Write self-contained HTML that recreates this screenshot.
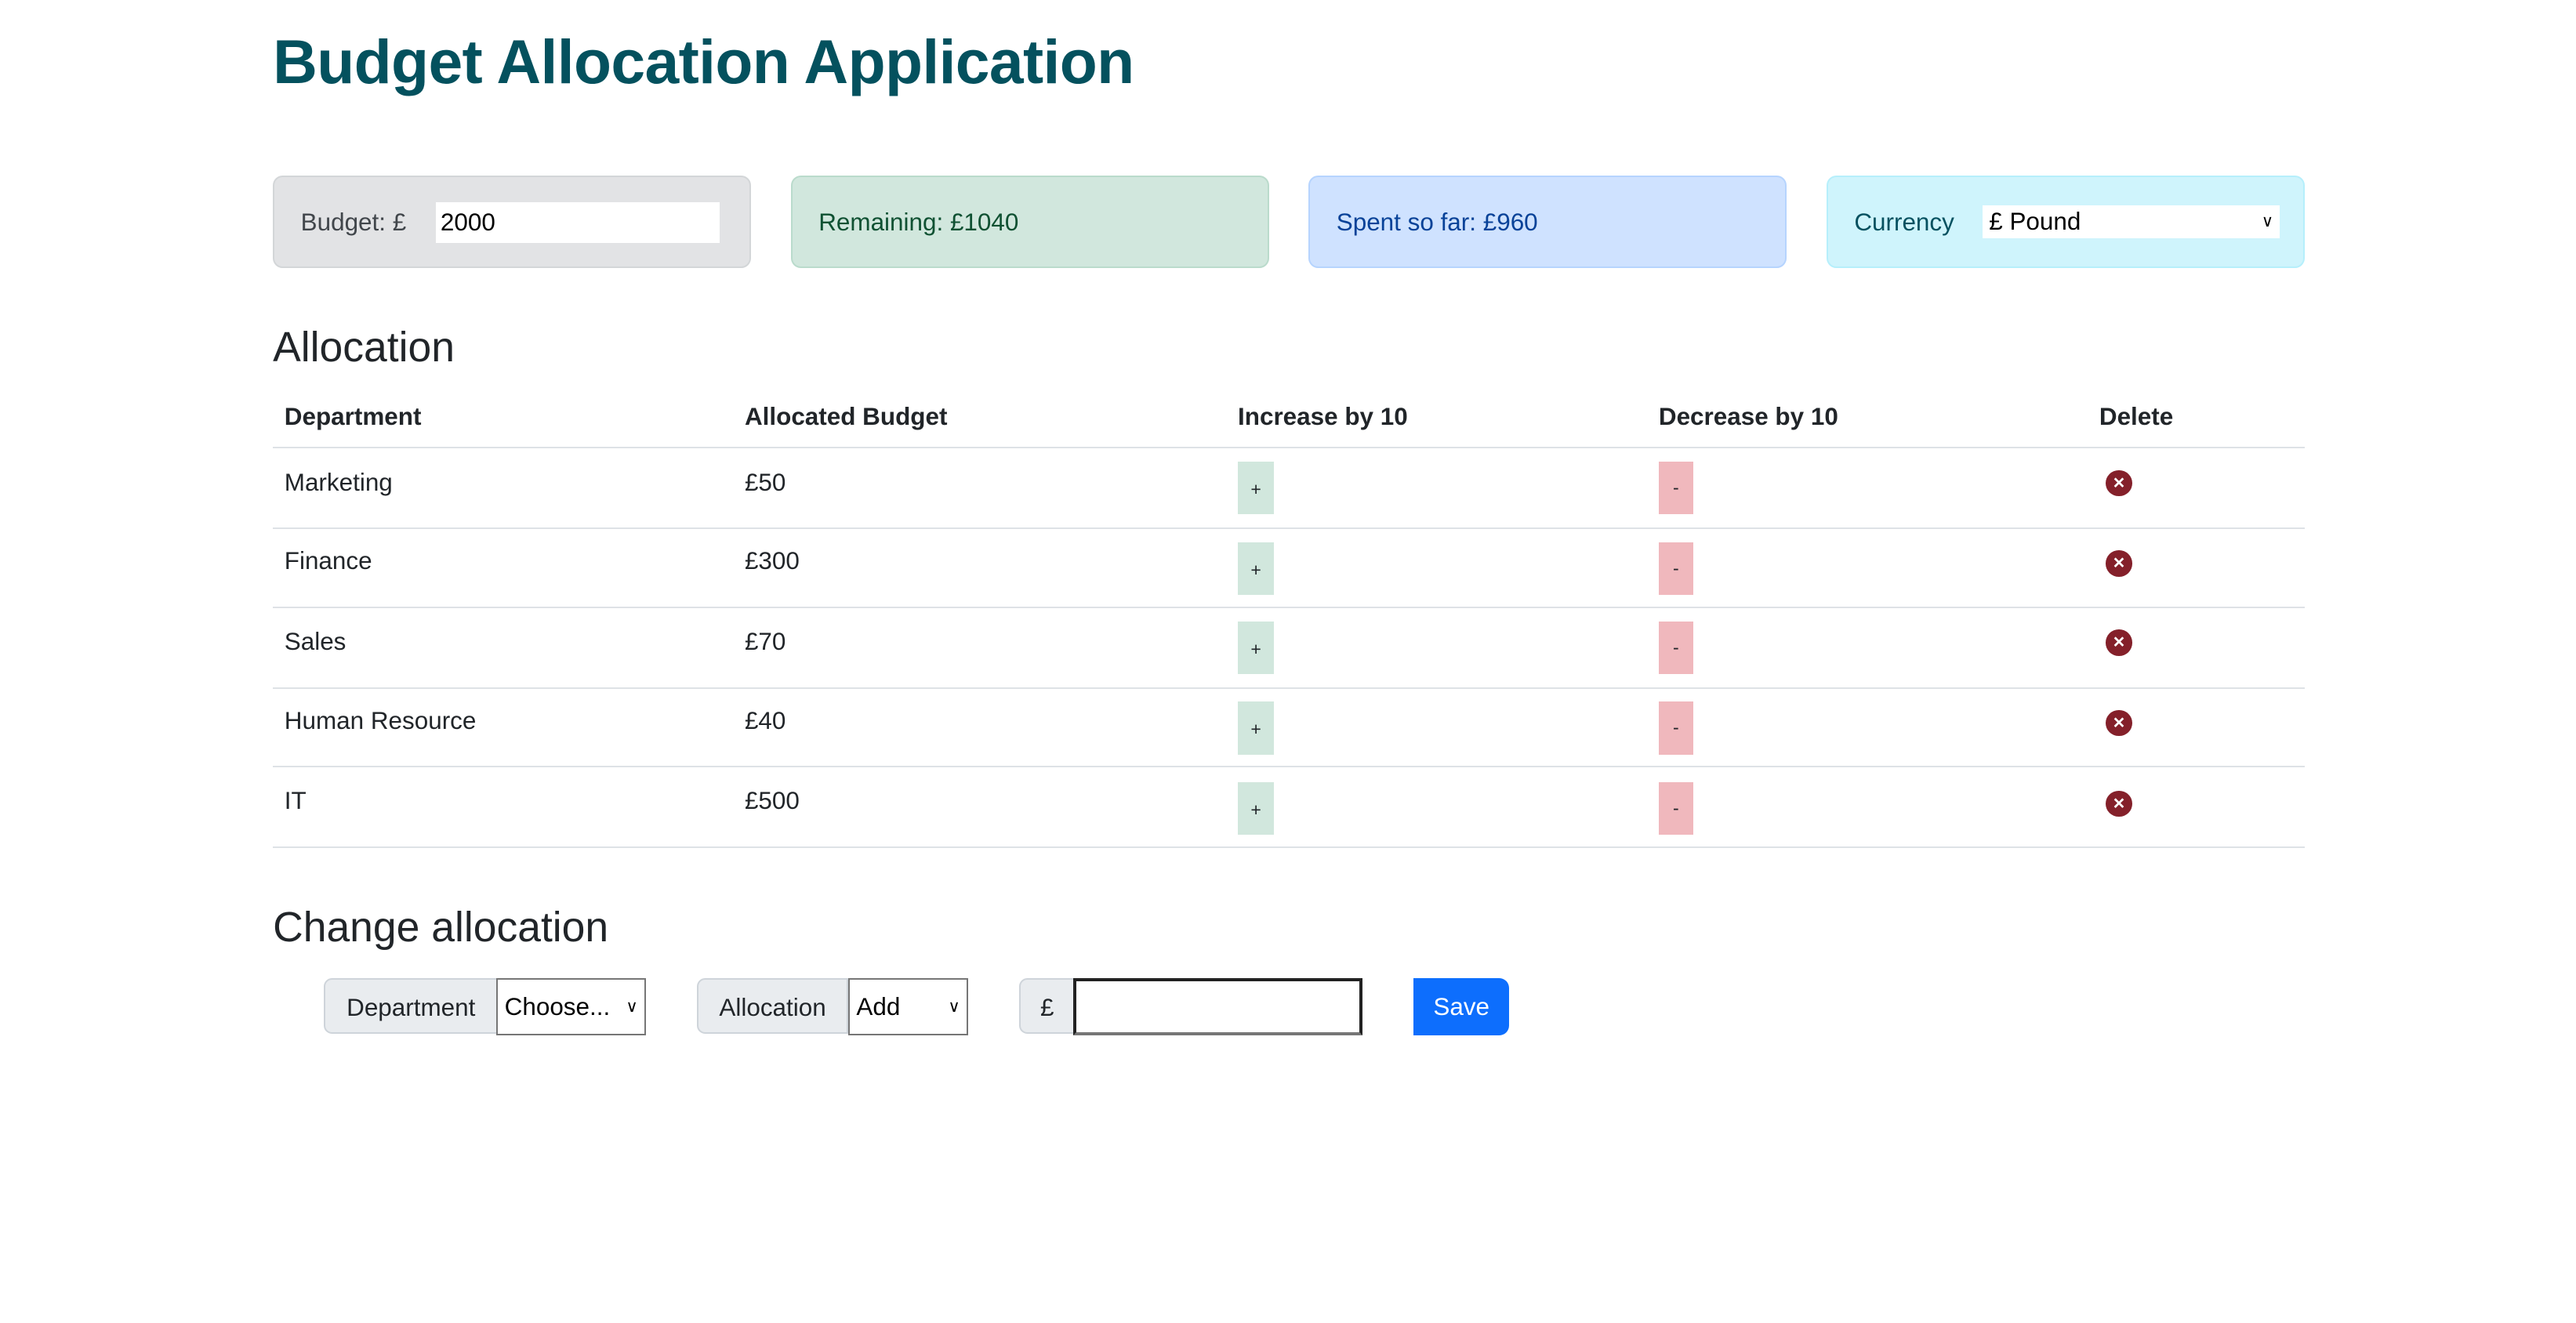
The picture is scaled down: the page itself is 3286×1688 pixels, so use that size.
<!DOCTYPE html>
<html><head><meta charset="utf-8"><style>
html,body{margin:0;padding:0;background:#fff;}
body{width:1567px;height:805px;zoom:2.097;font-family:"Liberation Sans",sans-serif;color:#212529;position:relative;overflow:hidden;}
.a{position:absolute;}
h1{position:absolute;left:166px;top:16px;margin:0;font-size:37.5px;font-weight:bold;color:#04515e;letter-spacing:-0.3px;}
.box{position:absolute;top:107px;width:289px;height:54px;border:1px solid;border-radius:6px;font-size:15px;}
.box span{position:absolute;left:16px;top:19px;}
h2{position:absolute;left:166px;margin:0;font-size:25.5px;font-weight:normal;}
.th{position:absolute;top:245px;font-weight:bold;font-size:15px;}
.line{position:absolute;left:166px;width:1236px;height:1px;background:#dee2e6;}
.td{position:absolute;font-size:15px;}
.plus{position:absolute;left:753px;width:22px;height:32px;background:#d1e7dd;font-size:11px;text-align:center;line-height:34px;}
.minus{position:absolute;left:1009px;width:21px;height:32px;background:#f0b8bd;font-size:11px;text-align:center;line-height:32px;}
.x{position:absolute;left:1281px;width:16px;height:16px;border-radius:50%;background:#84202a;color:#fff;font-size:12px;font-weight:bold;text-align:center;line-height:16px;}
.lbl{position:absolute;top:595px;height:34px;background:#e9ecef;border:1px solid #ced4da;border-radius:5px 0 0 5px;font-size:15px;line-height:34px;text-align:center;box-sizing:border-box;}
.sel{position:absolute;top:595px;height:35px;border:1px solid #767676;box-sizing:border-box;font-size:15px;line-height:33px;padding-left:4px;background:#fff;color:#000;}
.sel i{position:absolute;right:4px;top:0;font-style:normal;font-size:10px;}
</style></head><body>
<h1>Budget Allocation Application</h1>

<div class="box" style="left:166px;background:#e2e3e5;border-color:#d3d6d8;color:#41464b;"><span>Budget: £</span>
<div class="a" style="left:98px;top:15px;width:173px;height:25px;background:#fff;color:#000;font-size:15px;line-height:25px;padding-left:3px;box-sizing:border-box;">2000</div></div>
<div class="box" style="left:481px;background:#d1e7dd;border-color:#badbcc;color:#0f5132;"><span>Remaining: £1040</span></div>
<div class="box" style="left:796px;background:#cfe2ff;border-color:#b6d4fe;color:#084298;"><span>Spent so far: £960</span></div>
<div class="box" style="left:1111px;background:#cff4fc;border-color:#b6effb;color:#055160;"><span>Currency</span>
<div class="a" style="left:94px;top:17px;width:181px;height:20px;background:#fff;color:#000;font-size:15px;line-height:20px;padding-left:4px;box-sizing:border-box;">£ Pound<i style="position:absolute;right:4px;font-style:normal;font-size:10px;">&#8744;</i></div></div>

<h2 style="top:197px;">Allocation</h2>
<div class="th" style="left:173px;">Department</div>
<div class="th" style="left:453px;">Allocated Budget</div>
<div class="th" style="left:753px;">Increase by 10</div>
<div class="th" style="left:1009px;">Decrease by 10</div>
<div class="th" style="left:1277px;">Delete</div>
<div class="line" style="top:272px;"></div>

<div class="td" style="left:173px;top:285px;">Marketing</div><div class="td" style="left:453px;top:285px;">£50</div>
<div class="plus" style="top:281px;">+</div><div class="minus" style="top:281px;">-</div><div class="x" style="top:286px;">×</div>
<div class="line" style="top:321px;"></div>
<div class="td" style="left:173px;top:333px;">Finance</div><div class="td" style="left:453px;top:333px;">£300</div>
<div class="plus" style="top:330px;">+</div><div class="minus" style="top:330px;">-</div><div class="x" style="top:335px;">×</div>
<div class="line" style="top:369px;"></div>
<div class="td" style="left:173px;top:382px;">Sales</div><div class="td" style="left:453px;top:382px;">£70</div>
<div class="plus" style="top:378px;">+</div><div class="minus" style="top:378px;">-</div><div class="x" style="top:383px;">×</div>
<div class="line" style="top:418px;"></div>
<div class="td" style="left:173px;top:430px;">Human Resource</div><div class="td" style="left:453px;top:430px;">£40</div>
<div class="plus" style="top:427px;">+</div><div class="minus" style="top:427px;">-</div><div class="x" style="top:432px;">×</div>
<div class="line" style="top:466px;"></div>
<div class="td" style="left:173px;top:479px;">IT</div><div class="td" style="left:453px;top:479px;">£500</div>
<div class="plus" style="top:476px;">+</div><div class="minus" style="top:476px;">-</div><div class="x" style="top:481px;">×</div>
<div class="line" style="top:515px;"></div>

<h2 style="top:550px;">Change allocation</h2>
<div class="lbl" style="left:197px;width:106px;">Department</div>
<div class="sel" style="left:302px;width:91px;">Choose...<i>&#8744;</i></div>
<div class="lbl" style="left:424px;width:92px;">Allocation</div>
<div class="sel" style="left:516px;width:73px;">Add<i>&#8744;</i></div>
<div class="lbl" style="left:620px;width:34px;">£</div>
<div class="a" style="left:653px;top:595px;width:176px;height:35px;border:2px solid #222;border-bottom-color:#767676;box-sizing:border-box;background:#fff;"></div>
<div class="a" style="left:860px;top:595px;width:58px;height:35px;background:#0d6efd;color:#fff;border-radius:0 6px 6px 0;font-size:15px;line-height:35px;text-align:center;">Save</div>
</body></html>
